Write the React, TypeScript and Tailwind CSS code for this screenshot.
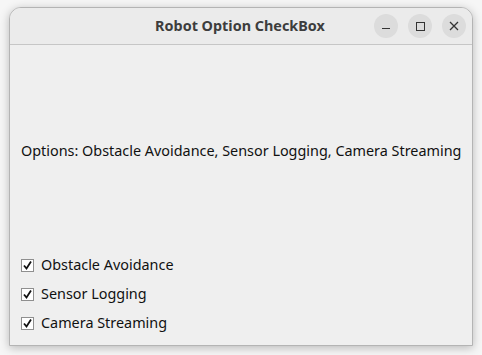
import React from "react";

function Check() {
  return (
    <div className="w-[13px] h-[13px] bg-white border border-[#8f8f8f] flex items-center justify-center">
      <svg width="11" height="11" viewBox="0 0 11 11">
        <path d="M2 5.5 L4.5 8.5 L9 1.5" fill="none" stroke="#111" strokeWidth="1.8" />
      </svg>
    </div>
  );
}

export default function App() {
  const items = ["Obstacle Avoidance", "Sensor Logging", "Camera Streaming"];
  return (
    <div className="w-[482px] h-[355px] bg-[#f6f6f6] pt-[7px] pl-[9px] overflow-hidden" style={{ fontFamily: '"Noto Sans", "Open Sans", sans-serif' }}>
      <div className="w-[464px] h-[339px] rounded-t-[12px] border border-[#b4b4b4] bg-[#efefef] shadow-[0_2px_10px_rgba(0,0,0,0.25)] flex flex-col overflow-hidden">
        <div className="h-[37px] shrink-0 bg-[#ebebeb] border-b border-[#c6c6c6] relative flex items-center justify-center">
          <span className="text-[14.4px] font-bold text-[#3d3d3d] ml-[-2px]">Robot Option CheckBox</span>
          <div className="absolute right-[6px] top-[6px] flex gap-[10px]">
            <div className="w-[24px] h-[24px] rounded-full bg-[#dcdcdc] flex items-center justify-center">
              <div className="w-[8px] h-[1px] bg-[#333] mt-[5px]" />
            </div>
            <div className="w-[24px] h-[24px] rounded-full bg-[#dcdcdc] flex items-center justify-center">
              <div className="w-[9px] h-[9px] border border-[#333]" />
            </div>
            <div className="w-[24px] h-[24px] rounded-full bg-[#dcdcdc] flex items-center justify-center">
              <svg width="10" height="10" viewBox="0 0 10 10">
                <path d="M1 1 L9 9 M9 1 L1 9" stroke="#333" strokeWidth="1.3" />
              </svg>
            </div>
          </div>
        </div>
        <div className="flex-1 flex flex-col pl-[11px] text-[14.4px] text-[#111]">
          <div className="mt-[96px] h-[20px] flex items-center">Options: Obstacle Avoidance, Sensor Logging, Camera Streaming</div>
          <div className="mt-[94px] flex flex-col gap-[9px]">
            {items.map((t) => (
              <div key={t} className="h-[20px] flex items-center gap-[7px]">
                <Check />
                <span>{t}</span>
              </div>
            ))}
          </div>
        </div>
      </div>
    </div>
  );
}
